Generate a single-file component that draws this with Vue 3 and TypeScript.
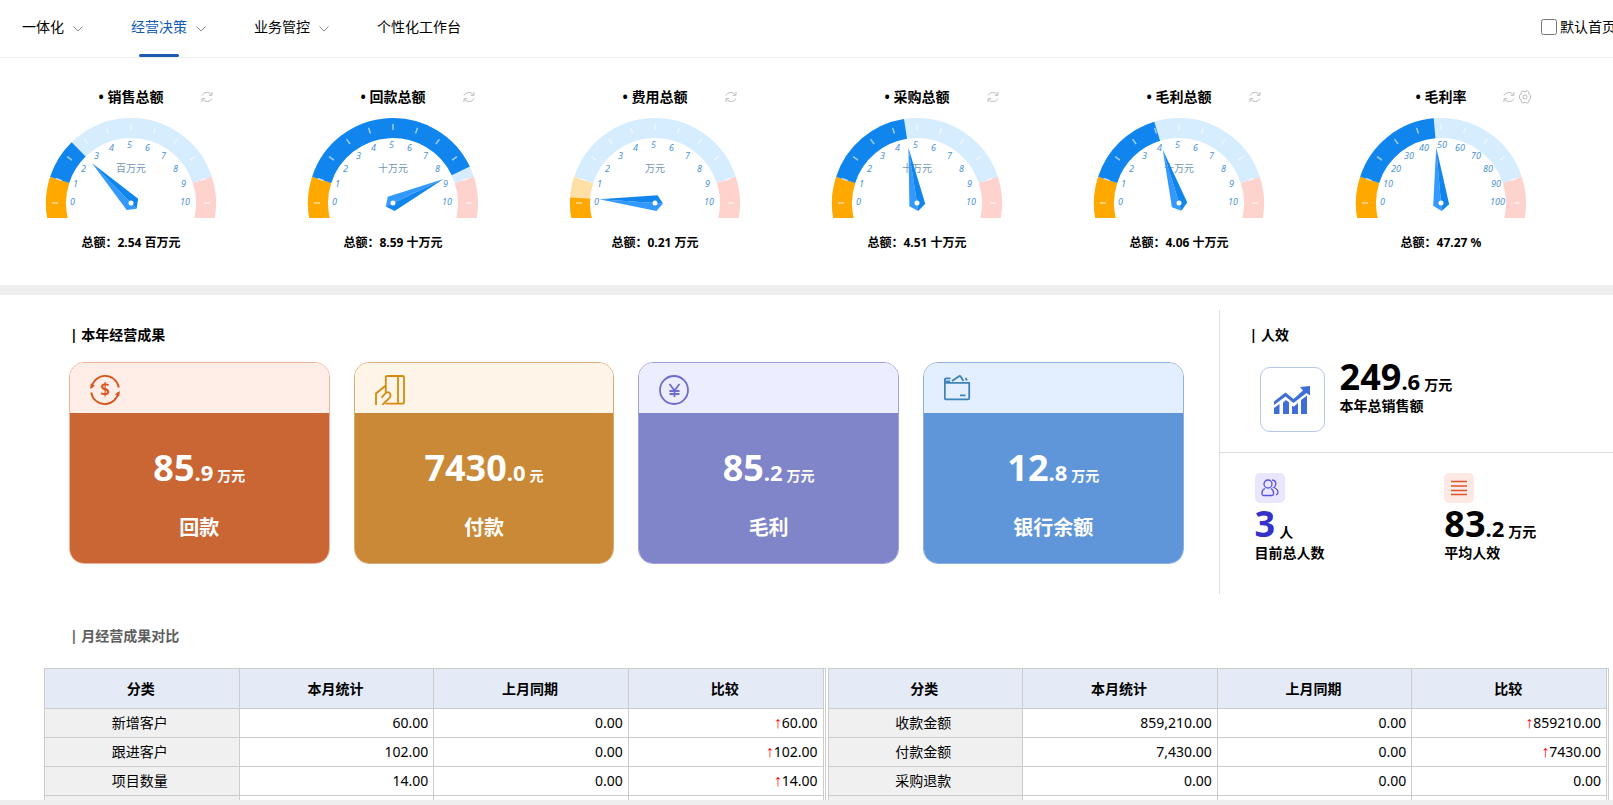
<script setup lang="ts">
interface Gauge {
  title: string
  value: number
  max: number
  unit: string
  dialUnit: string
  settings?: boolean
}

interface Card {
  kind: 'receipt' | 'payment' | 'profit' | 'bank'
  whole: string
  decimal: string
  unit: string
  label: string
}

interface Row {
  name: string
  current: string
  previous: string
  diff: string
  up: boolean
}

const navItems = [
  { label: '一体化', menu: true, active: false },
  { label: '经营决策', menu: true, active: true },
  { label: '业务管控', menu: true, active: false },
  { label: '个性化工作台', menu: false, active: false },
]

const gauges: Gauge[] = [
  { title: '销售总额', value: 2.54, max: 10, unit: '百万元', dialUnit: '百万元' },
  { title: '回款总额', value: 8.59, max: 10, unit: '十万元', dialUnit: '十万元' },
  { title: '费用总额', value: 0.21, max: 10, unit: '万元', dialUnit: '万元' },
  { title: '采购总额', value: 4.51, max: 10, unit: '十万元', dialUnit: '十万元' },
  { title: '毛利总额', value: 4.06, max: 10, unit: '十万元', dialUnit: '十万元' },
  { title: '毛利率', value: 47.27, max: 100, unit: '%', dialUnit: '', settings: true },
]

const cards: Card[] = [
  { kind: 'receipt', whole: '85', decimal: '.9', unit: '万元', label: '回款' },
  { kind: 'payment', whole: '7430', decimal: '.0', unit: '元', label: '付款' },
  { kind: 'profit', whole: '85', decimal: '.2', unit: '万元', label: '毛利' },
  { kind: 'bank', whole: '12', decimal: '.8', unit: '万元', label: '银行余额' },
]

const columns = ['分类', '本月统计', '上月同期', '比较']

const tables: Row[][] = [
  [
    { name: '新增客户', current: '60.00', previous: '0.00', diff: '60.00', up: true },
    { name: '跟进客户', current: '102.00', previous: '0.00', diff: '102.00', up: true },
    { name: '项目数量', current: '14.00', previous: '0.00', diff: '14.00', up: true },
    { name: '', current: '', previous: '', diff: '', up: false },
  ],
  [
    { name: '收款金额', current: '859,210.00', previous: '0.00', diff: '859210.00', up: true },
    { name: '付款金额', current: '7,430.00', previous: '0.00', diff: '7430.00', up: true },
    { name: '采购退款', current: '0.00', previous: '0.00', diff: '0.00', up: false },
    { name: '', current: '', previous: '', diff: '', up: false },
  ],
]

// Anchor of each dial number relative to the hub
const dialAnchors = [
  [-61, 2], [-58, -16], [-50, -31], [-37, -44], [-22, -52], [-4, -55],
  [14, -52], [30, -44], [42, -31], [50, -16], [49, 2],
]

const ticks = Array.from({ length: 11 }, (_, i) => i * 18 - 90)

// Arc on the ring between two scale positions (0 to 10), 18 degrees each
function arc(from: number, to: number): string {
  const point = (p: number) => {
    const a = (p * 18 * Math.PI) / 180
    return `${(-75 * Math.cos(a)).toFixed(2)} ${(-75 * Math.sin(a)).toFixed(2)}`
  }
  const large = (to - from) * 18 > 180 ? 1 : 0
  return `M${point(from)}A75 75 0 ${large} 1 ${point(to)}`
}

const position = (g: Gauge) => (g.value / g.max) * 10
const needle = (g: Gauge) => `rotate(${(position(g) * 18 - 90).toFixed(2)})`
</script>

<template>
  <div class="page">
    <header class="nav">
      <nav class="tabs">
        <a v-for="n in navItems" :key="n.label" href="#" class="tab" :class="{ active: n.active }">
          <span class="tab-text">{{ n.label }}</span>
          <svg v-if="n.menu" class="chevron" viewBox="0 0 10 6"><path d="M.5 .5L5 5L9.500 .5" /></svg>
        </a>
      </nav>
      <label class="default-home"><input type="checkbox" /><span>默认首页</span></label>
    </header>

    <main class="content">
      <section class="gauges">
        <article v-for="g in gauges" :key="g.title" class="gauge">
          <div class="gauge-head">
            <h2>• {{ g.title }}</h2>
            <div class="tools">
              <button type="button" aria-label="刷新">
                <svg viewBox="0 0 12 12">
                  <path d="M1 4.500C2.200 1.200 8 .2 10.400 3.800M11 1V4.300H7.800M11 7.500C9.800 10.800 4 11.800 1.600 8.200M1 11V7.700H4.200" />
                </svg>
              </button>
              <button v-if="g.settings" type="button" aria-label="设置">
                <svg viewBox="0 0 12 14">
                  <path d="M3.800 .8L6 1.800L8.200 .8L9.800 2L9.900 4L11.500 5.300V8.700L9.900 10L9.800 12L8.200 13.200L6 12.200L3.800 13.200L2.200 12L2.100 10L.5 8.700V5.300L2.100 4L2.200 2Z" />
                  <circle cx="6" cy="7" r="2" />
                </svg>
              </button>
            </div>
          </div>
          <svg class="dial" viewBox="-86 -86 172 101">
            <g class="ring">
              <path class="low-rest" :d="arc(-1.2, 1)" />
              <path class="mid-rest" :d="arc(1, 9)" />
              <path class="high-rest" :d="arc(9, 11.2)" />
              <path class="low" :d="arc(-1.2, Math.min(1, position(g)))" />
              <path v-if="position(g) > 1" class="mid" :d="arc(1, position(g))" />
            </g>
            <path v-for="t in ticks" :key="t" class="tick" d="M0 -73V-79" :transform="`rotate(${t})`" />
            <text v-for="(a, i) in dialAnchors" :key="i" class="num" :x="a[0]" :y="a[1]">{{ (i * g.max) / 10 }}</text>
            <text v-if="g.dialUnit" class="dial-unit" x="0" y="-31">{{ g.dialUnit }}</text>
            <g :transform="needle(g)">
              <path class="needle-left" d="M0 -56L-8 2L0 8Z" />
              <path class="needle-right" d="M0 -56L8 2L0 8Z" />
            </g>
            <circle class="hub" r="2.500" />
          </svg>
          <p class="total">总额：{{ g.value }} {{ g.unit }}</p>
        </article>
      </section>

      <section class="results">
        <div class="year">
          <h2 class="section-title">| 本年经营成果</h2>
          <div class="cards">
            <article v-for="c in cards" :key="c.kind" class="card" :class="c.kind">
              <div class="card-head">
                <svg v-if="c.kind === 'receipt'" viewBox="0 0 30 30">
                  <path d="M1.500 13A13.800 13.800 0 0 1 28.800 12.500M28.500 17A13.800 13.800 0 0 1 1.200 17.500" />
                  <path class="solid" d="M.2 14L.8 8.500L5 10.500ZM29.800 16L29.200 21.500L25 19.500Z" />
                  <text x="15" y="21">$</text>
                </svg>
                <svg v-else-if="c.kind === 'payment'" viewBox="0 0 30 30">
                  <path d="M1 30V18.500L10.800 10.500M10.800 17V2.500Q10.800 1 12.300 1H27.500Q29 1 29 2.500V27Q29 28.700 27.500 28.700H10.500M23 1V28.700" />
                  <path d="M6.500 22.700L11 17.700Q13.500 16.300 15 18.500Q16.200 20.500 14.500 23L7.300 30" />
                </svg>
                <svg v-else-if="c.kind === 'profit'" viewBox="0 0 30 30">
                  <circle cx="15" cy="15" r="14" />
                  <path d="M10.500 9L15.500 15.500L20.500 9M15.500 15.500V22M10.500 16H20.500M10.500 19H20.500" />
                </svg>
                <svg v-else viewBox="0 0 30 30">
                  <path d="M.8 7.800H25.200V23Q25.200 24.300 24 24.300H2.200Q.8 24.300 .8 23V5Q.8 3.300 2.500 3.300H6.500M.8 7.800Q1 6.500 3 6.500H6M8 6L15.500 1L16.500 1.200L19.500 6M21.500 3L23 5.500M16 20.300H21.500" />
                </svg>
              </div>
              <div class="card-body">
                <p class="figure"><b>{{ c.whole }}</b><i>{{ c.decimal }}</i><span>{{ c.unit }}</span></p>
                <h3>{{ c.label }}</h3>
              </div>
            </article>
          </div>
        </div>

        <aside class="staff">
          <div class="sales">
            <h2 class="section-title">| 人效</h2>
            <div class="sales-row">
              <div class="trend">
                <svg viewBox="0 0 36 28">
                  <path d="M0 22L5.500 18V28H0ZM9 16.500L12 14L15 16.500V28H9ZM18 20L20 20.500L24 17V28H18ZM27 14L33 9.500V28H27Z" />
                  <path d="M0 15.500L11.500 6.500L19.500 13L29 4.500L26 1L36 0V9.500L32.500 7L19.500 17L11.500 10.500L0 19Z" />
                </svg>
              </div>
              <div>
                <p class="figure"><b>249</b><i>.6</i><span>万元</span></p>
                <p class="caption">本年总销售额</p>
              </div>
            </div>
          </div>
          <div class="people">
            <div>
              <div class="badge violet">
                <svg viewBox="0 0 18 18">
                  <circle cx="7" cy="5" r="4" />
                  <path d="M4 9.500Q1 10.500 1 14V15Q1 16.500 2.500 16.500H11Q12.500 16.500 12.500 15V14Q12.500 10.500 9.700 9.500M11 1Q15 1.500 14.800 5Q14.700 7.500 12.800 8.500Q17 10 17 13.500Q17 15.200 15 15.800" />
                </svg>
              </div>
              <p class="figure blue"><b>3</b><span>人</span></p>
              <p class="caption">目前总人数</p>
            </div>
            <div>
              <div class="badge coral">
                <svg viewBox="0 0 18 18"><path d="M1 2.500H17M1 7H17M1 11.500H17M1 15.500H17" /></svg>
              </div>
              <p class="figure"><b>83</b><i>.2</i><span>万元</span></p>
              <p class="caption">平均人效</p>
            </div>
          </div>
        </aside>
      </section>

      <section class="monthly">
        <h2 class="section-title muted">| 月经营成果对比</h2>
        <div class="tables">
          <div v-for="(rows, t) in tables" :key="t" class="table-box">
            <table>
              <thead>
                <tr><th v-for="c in columns" :key="c" scope="col">{{ c }}</th></tr>
              </thead>
              <tbody>
                <tr v-for="(r, i) in rows" :key="i">
                  <td class="name">{{ r.name }}</td>
                  <td>{{ r.current }}</td>
                  <td>{{ r.previous }}</td>
                  <td><span v-if="r.up" class="up">↑</span>{{ r.diff }}</td>
                </tr>
              </tbody>
            </table>
          </div>
        </div>
      </section>
    </main>
  </div>
</template>

<style>
body {
  margin: 0;
  background: #eee;
}
</style>

<style scoped>
* {
  box-sizing: border-box;
}

.page {
  display: flex;
  flex-direction: column;
  height: 100vh;
  padding-bottom: 5px;
  overflow: hidden;
  background: #eee;
  color: #000;
  font: 14px/20px "Noto Sans", "Noto Sans CJK SC", sans-serif;
}

h2, h3, p {
  margin: 0;
}

.nav {
  flex: none;
  display: flex;
  justify-content: space-between;
  align-items: stretch;
  height: 58px;
  padding-left: 22px;
  border-bottom: 1px solid #eee;
  background: #fff;
  overflow: hidden;
}

.tabs {
  display: flex;
  gap: 48px;
}

.tab {
  display: flex;
  gap: 9px;
  color: #000;
  text-decoration: none;
  white-space: nowrap;
}

.tab-text {
  display: flex;
  flex-direction: column;
  align-items: center;
  justify-content: space-between;
  padding-top: 17px;
}

.active {
  color: #125bb0;
}

.active .tab-text::after {
  content: "";
  width: 40px;
  height: 3px;
  border-radius: 2px;
  background: #1c5bb0;
}

.chevron {
  width: 10px;
  height: 6px;
  margin-top: 26px;
  fill: none;
  stroke: #888;
}

.default-home {
  flex: none;
  display: flex;
  gap: 3px;
  height: 20px;
  margin: 17px -3px 0 0;
  white-space: nowrap;
}

.default-home input {
  width: 16px;
  height: 16px;
  margin: 2px 0 0;
}

.content {
  flex: 1;
  min-height: 0;
  overflow: hidden;
  background: #fff;
}

.gauges {
  display: grid;
  grid-template-columns: repeat(6, 1fr);
  padding: 29px 41px 33px 0;
  border-bottom: 10px solid #eee;
}

.gauge {
  display: flex;
  flex-direction: column;
  align-items: center;
}

.gauge-head {
  display: grid;
  grid-template-columns: 1fr 110px 1fr;
  align-self: stretch;
  height: 20px;
}

.gauge-head h2 {
  grid-column: 2;
  font-size: 14px;
  line-height: 20px;
  text-align: center;
  white-space: nowrap;
}

.tools {
  display: flex;
  align-items: center;
  justify-content: center;
  gap: 4px;
  width: 42px;
}

.tools button {
  display: flex;
  padding: 0;
  border: 0;
  background: none;
}

.tools svg {
  width: 12px;
  height: 14px;
  fill: none;
  stroke: #bbb;
}

.dial {
  width: 172px;
  height: 101px;
  margin: 10px 0 16px;
  overflow: hidden;
}

.ring {
  fill: none;
  stroke-width: 20;
}

.low-rest { stroke: #ffdfa6; }
.mid-rest { stroke: #d6ecff; }
.high-rest { stroke: #ffd3cd; }
.low { stroke: #ffa800; }
.mid { stroke: #1085ee; }

.tick {
  stroke: #fff;
  stroke-opacity: 0.6;
  stroke-width: 1.5;
}

.num {
  fill: #4d93d2;
  font-size: 9px;
  font-style: italic;
}

.dial-unit {
  fill: #7397b5;
  font-size: 10px;
  text-anchor: middle;
}

.needle-left { fill: #3399ff; }
.needle-right { fill: #1085ee; }
.hub { fill: #fff; }

.total {
  font-size: 12px;
  font-weight: bold;
  line-height: 18px;
}

.results {
  display: grid;
  grid-template-columns: 3.09fr 1fr;
  padding-top: 15px;
}

.section-title {
  font-size: 14px;
  line-height: 20px;
}

.year {
  padding: 15px 35px 0 69px;
}

.year .section-title {
  padding-left: 1px;
}

.cards {
  display: grid;
  grid-template-columns: repeat(4, 1fr);
  gap: 24px;
  margin-top: 17px;
}

.card {
  border: 1px solid;
  border-radius: 15px;
  overflow: hidden;
}

.card-head {
  height: 50px;
  padding: 12px 20px 0;
}

.card-head svg {
  display: block;
  width: 30px;
  height: 30px;
  fill: none;
  stroke: currentColor;
  stroke-width: 1.8;
}

.card-head .solid {
  fill: currentColor;
  stroke: none;
}

.card-head text {
  fill: currentColor;
  stroke: none;
  font-size: 17px;
  font-weight: 600;
  text-anchor: middle;
}

.card-body {
  height: 150px;
  padding-top: 35px;
  color: #fff;
  text-align: center;
}

.card-body h3 {
  margin-top: 28px;
  font-size: 20px;
  line-height: 24px;
}

.receipt { border-color: #eeb29b; color: #d9541a; }
.receipt .card-head { background: #ffede8; }
.receipt .card-body { background: #c96633; }
.payment { border-color: #d9ac74; color: #d68a0c; }
.payment .card-head { background: #fff4e8; }
.payment .card-body { background: #ca8936; }
.profit { border-color: #9fa0de; color: #6d6bd0; }
.profit .card-head { background: #ecedff; }
.profit .card-body { background: #8084c8; }
.bank { border-color: #8db0df; color: #3d82b8; }
.bank .card-head { background: #e3efff; }
.bank .card-body { background: #5f96d9; }

.figure {
  height: 40px;
  font-weight: bold;
  line-height: 40px;
  white-space: nowrap;
}

.figure b {
  font-size: 36px;
  font-weight: 700;
}

.figure i {
  font-size: 22px;
  font-style: normal;
}

.figure span {
  margin-left: 4px;
  font-size: 14px;
}

.staff {
  height: 284px;
  border-left: 1px solid #ddd;
}

.sales {
  height: 143px;
  padding: 15px 0 0 30px;
  border-bottom: 1px solid #ddd;
}

.sales-row {
  display: flex;
  gap: 15px;
  padding-left: 10px;
}

.trend {
  display: flex;
  align-items: center;
  justify-content: center;
  width: 65px;
  height: 65px;
  margin-top: 22px;
  border: 1px solid #b4c8ee;
  border-radius: 10px;
}

.trend svg {
  width: 36px;
  height: 28px;
  fill: #3f6fd4;
}

.sales .figure {
  margin-top: 12px;
}

.caption {
  margin-top: -1px;
  font-weight: bold;
  line-height: 20px;
}

.people {
  display: grid;
  grid-template-columns: 9fr 8fr;
  padding: 20px 0 0 35px;
}

.people .figure {
  margin-top: 1px;
}

.badge {
  display: flex;
  align-items: center;
  justify-content: center;
  width: 30px;
  height: 30px;
  border-radius: 5px;
}

.badge svg {
  width: 18px;
  height: 18px;
  fill: none;
  stroke-width: 1.3;
}

.violet { background: #e9e6fd; stroke: #5b52e0; }
.coral { background: #ffe9e4; stroke: #d8552f; }
.blue b { color: #3431c9; }

.monthly {
  padding: 32px 4px 0 44px;
}

.monthly .section-title {
  padding-left: 26px;
}

.muted {
  color: #5f5f5f;
}

.tables {
  display: grid;
  grid-template-columns: 1fr 1fr;
  gap: 2px;
  margin-top: 22px;
}

.table-box {
  padding-right: 1px;
  border-top: 1px solid #ccc;
  border-right: 1px solid #ccc;
}

table {
  width: 100%;
  border-right: 1px solid #ccc;
  border-spacing: 0;
  table-layout: fixed;
}

th, td {
  height: 29px;
  padding: 0 5px;
  border-bottom: 1px solid #ccc;
  border-left: 1px solid #ccc;
  text-align: right;
}

th {
  height: 40px;
  padding-right: 7px;
  background: #e4ebf7;
  text-align: center;
}

.name {
  padding-right: 9px;
  background: #f0f0f0;
  text-align: center;
}

.up {
  color: #f00;
  font-family: "Liberation Sans", sans-serif;
  font-size: 16px;
  line-height: 16px;
}
</style>
